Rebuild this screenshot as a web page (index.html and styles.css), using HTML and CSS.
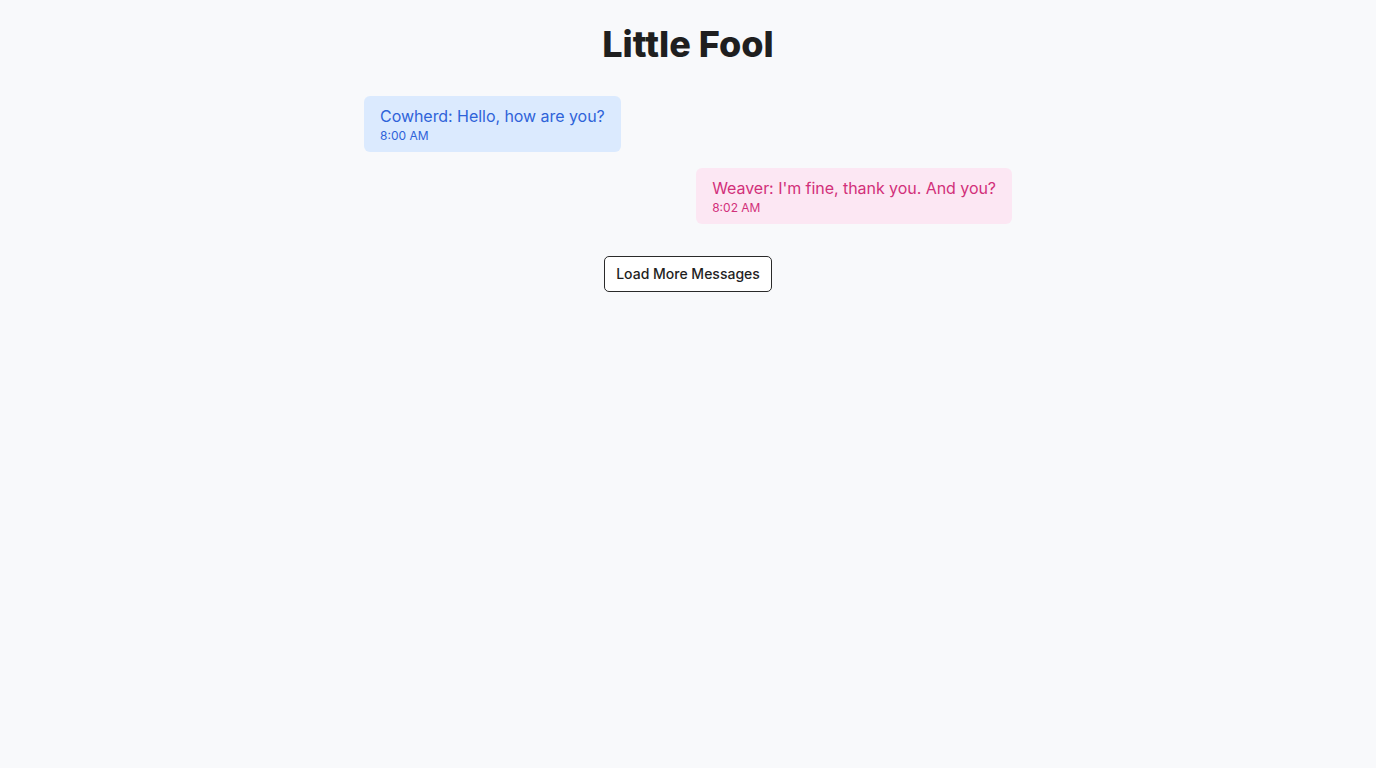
FILE: index.html
```html
<!DOCTYPE html>
<html lang="en">
<head>
<meta charset="utf-8">
<title>Little Fool</title>
<link rel="stylesheet" href="styles.css">
</head>
<body>
<main class="page">
  <h1 class="title">Little Fool</h1>
  <div class="messages">
    <div class="bubble left">
      <div class="text">Cowherd: Hello, how are you?</div>
      <div class="time">8:00 AM</div>
    </div>
    <div class="bubble right">
      <div class="text">Weaver: I'm fine, thank you. And you?</div>
      <div class="time">8:02 AM</div>
    </div>
  </div>
  <div class="actions">
    <button class="load-btn">Load More Messages</button>
  </div>
</main>
</body>
</html>
```

FILE: styles.css
```css
* { box-sizing: border-box; }
html, body { margin: 0; padding: 0; }
body {
  background: #f8f9fb;
  font-family: Inter, "Noto Sans", sans-serif;
  color: #1f1f1f;
  min-height: 100vh;
}
.page {
  max-width: 672px;
  margin: 0 auto;
  padding: 24px 12px;
}
.title {
  margin: 0 0 32px;
  font-size: 36px;
  line-height: 40px;
  font-weight: 800;
  text-align: center;
  color: #1f1f1f;
}
.messages {
  display: flex;
  flex-direction: column;
  gap: 16px;
}
.bubble {
  padding: 8px 16px;
  border-radius: 6px;
  max-width: 70%;
}
.bubble.left {
  align-self: flex-start;
  background: #dbeafe;
  color: #2f63d9;
}
.bubble.right {
  align-self: flex-end;
  background: #fce7f3;
  color: #d2307a;
}
.text { font-size: 16px; line-height: 24px; letter-spacing: -0.003em; }
.time { font-size: 12px; line-height: 16px; }
.actions {
  display: flex;
  justify-content: center;
  margin-top: 32px;
}
.load-btn {
  font-family: Inter, "Noto Sans", sans-serif;
  font-size: 14px;
  font-weight: 500;
  line-height: 20px;
  height: 36px;
  padding: 7px 11px;
  background: #ffffff;
  color: #1f1f1f;
  border: 1px solid #2a2a2a;
  border-radius: 5px;
  cursor: pointer;
}
```
